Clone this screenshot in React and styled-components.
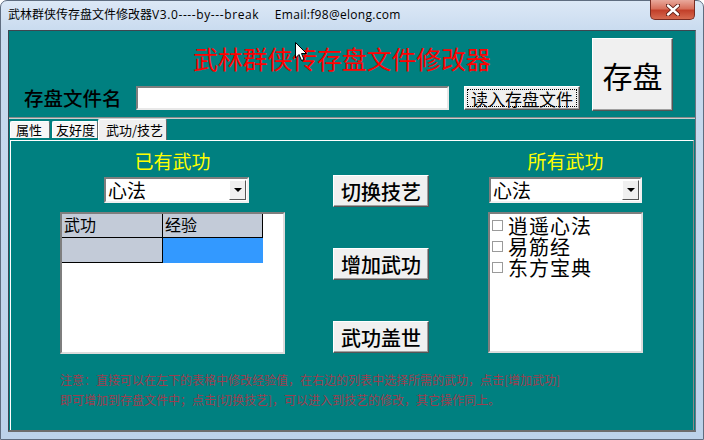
import React from 'react';
import styled, { createGlobalStyle } from 'styled-components';

const GlobalStyle = createGlobalStyle`
    html, body {
        margin: 0;
        padding: 0;
    }
    body {
        width: 704px;
        height: 440px;
        overflow: hidden;
        background: #ffffff;
        font-family: "Noto Sans CJK SC", "Noto Sans", sans-serif;
    }
    * {
        box-sizing: border-box;
    }
`

const StyledWindow = styled.div`
    position: relative;
    width: 704px;
    height: 440px;
    display: flex;
    flex-direction: column;
    background: linear-gradient(180deg, #dce8f6 0px, #c9dbef 30px, #bcd2ea 100%);
    border: 1px solid #5f6d80;
    border-radius: 7px 7px 0 0;
`

const StyledTitleBar = styled.div`
    display: flex;
    align-items: flex-start;
    height: 29px;
`

const StyledTitleText = styled.div`
    padding: 6px 0 0 7px;
    font-family: "Open Sans", "Noto Sans CJK SC", sans-serif;
    font-size: 12px;
    line-height: 16px;
    color: #000;
    white-space: pre;
`

const StyledLatin = styled.span`
    letter-spacing: ${p => p.$ls}px;
`

const StyledClose = styled.div`
    margin: -1px 8px 0 auto;
    width: 45px;
    height: 20px;
    display: flex;
    align-items: center;
    justify-content: center;
    border: 1px solid #7a2c22;
    border-top: none;
    border-radius: 0 0 5px 5px;
    background: linear-gradient(180deg, #e9a99c 0%, #d8705c 45%, #c2402a 55%, #d66a50 100%);
`

const StyledClient = styled.div`
    flex: 1;
    margin: 0 7px 7px 7px;
    display: flex;
    flex-direction: column;
    background: #008080;
    border-top: 1px solid #3e4650;
    border-left: 1px solid #3e4650;
    border-right: 1px solid #6c7480;
    border-bottom: 2px solid #6c6c6c;
`

const StyledHeader = styled.div`
    display: flex;
    height: 86px;
`

const StyledHeaderMain = styled.div`
    display: flex;
    flex-direction: column;
`

const StyledTitle = styled.div`
    padding: 12px 0 0 184px;
    font-size: 25px;
    line-height: 30px;
    letter-spacing: -0.2px;
    color: #ff0000;
`

const StyledInputRow = styled.div`
    display: flex;
    align-items: center;
    height: 24px;
    margin-top: 13px;
    padding-left: 15px;
`

const StyledLabel = styled.div`
    width: 99px;
    font-size: 19.5px;
    line-height: 24px;
    font-weight: 500;
    color: #000;
    white-space: nowrap;
`

const StyledTextInput = styled.div`
    width: 313px;
    height: 24px;
    margin-left: 13px;
    background: #fff;
    border: 2px solid;
    border-color: #7e7e7e #e8e8e8 #e8e8e8 #7e7e7e;
`

const StyledButton = styled.button`
    display: flex;
    align-items: center;
    justify-content: center;
    padding: 0;
    width: ${p => p.$w}px;
    height: ${p => p.$h}px;
    font-family: "Noto Sans CJK SC", sans-serif;
    font-size: ${p => p.$size}px;
    font-weight: ${p => p.$weight || 400};
    color: #000;
    background: #f0f0f0;
    border: 1px solid;
    border-color: #ffffff #555555 #555555 #ffffff;
    box-shadow: inset -1px -1px 0 #a0a0a0;
    outline: none;
`

const StyledLoadButton = styled(StyledButton)`
    margin-left: 15px;
    padding: 2px;
`

const StyledFocus = styled.span`
    display: flex;
    align-items: center;
    justify-content: center;
    width: 100%;
    height: 100%;
    border: 1px dotted #000;
    line-height: 1;
`

const StyledBigButton = styled(StyledButton)`
    margin: 7px 0 0 12px;
`

const StyledDivider = styled.div`
    border-top: 1px solid #8a8a8a;
    border-bottom: 1px solid #c8d0d0;
`

const StyledTabStrip = styled.div`
    display: flex;
    height: 21px;
    padding-left: 1px;
`

const StyledTab = styled.div`
    width: ${p => p.$w}px;
    height: ${p => (p.$active ? 21 : 17)}px;
    margin-top: ${p => (p.$active ? 0 : 2)}px;
    margin-right: ${p => p.$gap || 0}px;
    padding-left: ${p => p.$pad}px;
    font-size: 13px;
    line-height: ${p => (p.$active ? 19 : 16)}px;
    color: #000;
    background: ${p => (p.$active ? '#f0f0f0' : '#f7f7f7')};
    border-top: 1px solid #ffffff;
    border-left: 1px solid #ffffff;
    border-right: 1px solid #6a6a6a;
    border-radius: 2px 2px 0 0;
    white-space: nowrap;
`

const StyledPanel = styled.div`
    flex: 1;
    margin: 0 1px 0 1px;
    display: flex;
    flex-direction: column;
    padding: 9px 0 0 49px;
    border-top: 1px solid #ffffff;
    border-left: 1px solid #ffffff;
    border-right: 1px solid #8a8a8a;
`

const StyledColumns = styled.div`
    display: flex;
    align-items: flex-start;
`

const StyledSide = styled.div`
    display: flex;
    flex-direction: column;
    width: ${p => p.$w}px;
    margin-left: ${p => p.$ml}px;
`

const StyledHeading = styled.div`
    height: 22px;
    font-size: 19px;
    line-height: 22px;
    text-align: center;
    color: #ffff00;
`

const StyledCombo = styled.div`
    display: flex;
    align-items: center;
    justify-content: space-between;
    width: ${p => p.$w}px;
    height: 26px;
    margin: 5px 0 0 ${p => p.$ml}px;
    padding: 0 1px 0 2px;
    background: #fff;
    border: 2px solid;
    border-color: #7e7e7e #f0f0f0 #f0f0f0 #7e7e7e;
    font-size: 19px;
    line-height: 22px;
    color: #000;
`

const StyledDrop = styled.div`
    display: flex;
    align-items: center;
    justify-content: center;
    width: 17px;
    height: 20px;
    background: #f0f0f0;
    border: 1px solid;
    border-color: #ffffff #555555 #555555 #ffffff;

    &::after {
        content: '';
        border-left: 4px solid transparent;
        border-right: 4px solid transparent;
        border-top: 4px solid #000;
    }
`

const StyledSunken = styled.div`
    width: ${p => p.$w}px;
    height: ${p => p.$h}px;
    margin-top: 9px;
    background: #fff;
    border: 2px solid;
    border-color: #7e7e7e #dcdcdc #dcdcdc #7e7e7e;
`

const StyledGrid = styled.div`
    display: grid;
    grid-template-columns: 101px 100px;
    grid-auto-rows: 24px 25px;
`

const StyledCell = styled.div`
    padding-left: 2px;
    font-size: 16px;
    line-height: 20px;
    color: #000;
    background: ${p => p.$bg};
    border-right: 1px solid ${p => (p.$edge ? '#000' : 'transparent')};
    border-bottom: 1px solid ${p => (p.$edge ? '#000' : 'transparent')};
`

const StyledMid = styled.div`
    display: flex;
    flex-direction: column;
    gap: 41px;
    margin-left: 48px;
    padding-top: 25px;
`

const StyledList = styled.div`
    display: flex;
    flex-direction: column;
    padding: 1px 0 0 2px;
`

const StyledItem = styled.div`
    display: flex;
    align-items: center;
    height: 21px;
    font-size: 20px;
    line-height: 21px;
    letter-spacing: 1px;
    color: #000;
`

const StyledCheck = styled.span`
    width: 11px;
    height: 11px;
    margin-right: 5px;
    border: 1px solid #9a9a9a;
    background: #fff;
`

const StyledNote = styled.div`
    margin-top: 16px;
    font-size: 12px;
    line-height: 20px;
    color: #9b3f4f;
    white-space: nowrap;
`

const StyledCursor = styled.svg`
    position: absolute;
    left: 294px;
    top: 41px;
`

const items = ['逍遥心法', '易筋经', '东方宝典']

const App = () => {
    return (
        <React.Fragment>
            <GlobalStyle />
            <StyledWindow>
                <StyledTitleBar>
                    <StyledTitleText>
                        武林群侠传存盘文件修改器<StyledLatin $ls={0.6}>V3.0----by---break</StyledLatin>
                        {'     '}
                        <StyledLatin $ls={0.3}>Email:f98@elong.com</StyledLatin>
                    </StyledTitleText>
                    <StyledClose>
                        <svg width="14" height="12" viewBox="0 0 14 12">
                            <path d="M2 1.5 L12 10.5 M12 1.5 L2 10.5" stroke="#5a1a12" strokeWidth="4.2" strokeLinecap="round" />
                            <path d="M2 1.5 L12 10.5 M12 1.5 L2 10.5" stroke="#ffffff" strokeWidth="2.4" strokeLinecap="round" />
                        </svg>
                    </StyledClose>
                </StyledTitleBar>
                <StyledClient>
                    <StyledHeader>
                        <StyledHeaderMain>
                            <StyledTitle>武林群侠传存盘文件修改器</StyledTitle>
                            <StyledInputRow>
                                <StyledLabel>存盘文件名</StyledLabel>
                                <StyledTextInput />
                                <StyledLoadButton $w={116} $h={24} $size={17}>
                                    <StyledFocus>读入存盘文件</StyledFocus>
                                </StyledLoadButton>
                            </StyledInputRow>
                        </StyledHeaderMain>
                        <StyledBigButton $w={81} $h={73} $size={30}>存盘</StyledBigButton>
                    </StyledHeader>
                    <StyledDivider />
                    <StyledTabStrip>
                        <StyledTab $w={40} $pad={5} $gap={2}>属性</StyledTab>
                        <StyledTab $w={46} $pad={3}>友好度</StyledTab>
                        <StyledTab $w={69} $pad={7} $active>武功/技艺</StyledTab>
                    </StyledTabStrip>
                    <StyledPanel>
                        <StyledColumns>
                            <StyledSide $w={225} $ml={0}>
                                <StyledHeading>已有武功</StyledHeading>
                                <StyledCombo $w={145} $ml={44}>
                                    <span>心法</span>
                                    <StyledDrop />
                                </StyledCombo>
                                <StyledSunken $w={225} $h={142}>
                                    <StyledGrid>
                                        <StyledCell $bg="#c3cbd8" $edge>武功</StyledCell>
                                        <StyledCell $bg="#c3cbd8" $edge>经验</StyledCell>
                                        <StyledCell $bg="#c3cbd8" $edge />
                                        <StyledCell $bg="#3399ff" />
                                    </StyledGrid>
                                </StyledSunken>
                            </StyledSide>
                            <StyledMid>
                                <StyledButton $w={96} $h={32} $size={20} $weight={500}>切换技艺</StyledButton>
                                <StyledButton $w={96} $h={32} $size={20} $weight={500}>增加武功</StyledButton>
                                <StyledButton $w={96} $h={32} $size={20} $weight={500}>武功盖世</StyledButton>
                            </StyledMid>
                            <StyledSide $w={155} $ml={59}>
                                <StyledHeading>所有武功</StyledHeading>
                                <StyledCombo $w={153} $ml={1}>
                                    <span>心法</span>
                                    <StyledDrop />
                                </StyledCombo>
                                <StyledSunken $w={155} $h={141}>
                                    <StyledList>
                                        {items.map(name => (
                                            <StyledItem key={name}>
                                                <StyledCheck />
                                                {name}
                                            </StyledItem>
                                        ))}
                                    </StyledList>
                                </StyledSunken>
                            </StyledSide>
                        </StyledColumns>
                        <StyledNote>
                            注意：直接可以在左下的表格中修改经验值，在右边的列表中选择所需的武功，点击[增加武功]<br />
                            即可增加到存盘文件中；点击[切换技艺]，可以进入到技艺的修改，其它操作同上。
                        </StyledNote>
                    </StyledPanel>
                </StyledClient>
                <StyledCursor width="13" height="20" viewBox="0 0 13 20">
                    <path d="M0.5 0.5 L0.5 16 L4 12.5 L6.5 18.5 L9 17.5 L6.5 11.5 L11.5 11.5 Z" fill="#fff" stroke="#000" strokeWidth="1" strokeLinejoin="round" />
                </StyledCursor>
            </StyledWindow>
        </React.Fragment>
    )
}

export default App
